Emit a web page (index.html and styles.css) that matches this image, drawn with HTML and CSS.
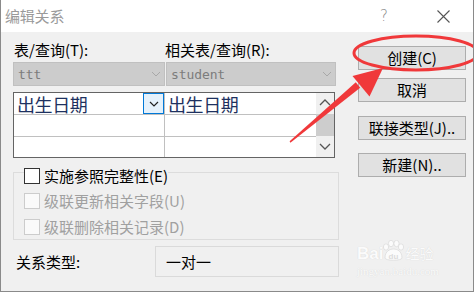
FILE: index.html
```html
<!DOCTYPE html>
<html lang="zh-CN">
<head>
<meta charset="utf-8">
<title>编辑关系</title>
<link rel="stylesheet" href="styles.css">
</head>
<body>
<div class="window">
  <div class="titlebar">
    <span class="title">编辑关系</span>
    <span class="help">?</span>
    <svg class="close" width="13" height="13" viewBox="0 0 13 13"><path d="M0.5 0.5 L12.5 12.5 M12.5 0.5 L0.5 12.5" stroke="#555" stroke-width="1.1" fill="none"/></svg>
  </div>
  <div class="content">
    <div class="main">
      <div class="labels">
        <span class="lab lab-left">表/查询(T):</span>
        <span class="lab lab-right">相关表/查询(R):</span>
      </div>
      <div class="combos">
        <div class="combo combo-left"><span class="combo-text">ttt</span><svg class="chev" width="10" height="6" viewBox="0 0 10 6"><path d="M1 1 L5 5 L9 1" stroke="#a8a8a8" stroke-width="1" fill="none"/></svg></div>
        <div class="combo combo-right"><span class="combo-text">student</span><svg class="chev" width="10" height="6" viewBox="0 0 10 6"><path d="M1 1 L5 5 L9 1" stroke="#a8a8a8" stroke-width="1" fill="none"/></svg></div>
      </div>
      <div class="grid">
        <div class="cells">
          <div class="cell c1 r1"><span class="cell-text">出生日期</span><span class="dd"><svg width="10" height="6" viewBox="0 0 10 6"><path d="M1 1 L5 5 L9 1" stroke="#222" stroke-width="1.2" fill="none"/></svg></span></div>
          <div class="cell c2 r1"><span class="cell-text">出生日期</span></div>
          <div class="cell c1 r2"></div>
          <div class="cell c2 r2"></div>
          <div class="cell c1 r3"></div>
          <div class="cell c2 r3"></div>
        </div>
        <div class="scrollbar">
          <svg class="sb-arrow" width="18" height="21" viewBox="0 0 18 21"><path d="M4 12 L9 7 L14 12" stroke="#555" stroke-width="1.3" fill="none"/></svg>
          <div class="sb-thumb"></div>
          <svg class="sb-arrow" width="18" height="21" viewBox="0 0 18 21"><path d="M4 8 L9 13 L14 8" stroke="#555" stroke-width="1.3" fill="none"/></svg>
        </div>
      </div>
      <fieldset class="group">
        <legend class="legend"><span class="cb"></span><span>实施参照完整性(E)</span></legend>
        <div class="opt disabled"><span class="cb cb-dis"></span><span>级联更新相关字段(U)</span></div>
        <div class="opt disabled"><span class="cb cb-dis"></span><span>级联删除相关记录(D)</span></div>
      </fieldset>
      <div class="type-row">
        <span class="type-label">关系类型:</span>
        <div class="type-box">一对一</div>
      </div>
    </div>
    <div class="buttons">
      <div class="btn btn-create">创建(C)</div>
      <div class="btn btn-cancel">取消</div>
      <div class="btn btn-join">联接类型(J)..</div>
      <div class="btn btn-new">新建(N)..</div>
    </div>
  </div>

  <div class="watermark">
    <div class="wm-top"><span class="wm-bai">Bai</span><svg class="wm-paw" width="24" height="22" viewBox="0 0 24 22"><g fill="#fbfbfb" stroke="#dcdcdc" stroke-width="0.8"><ellipse cx="5" cy="7" rx="2.6" ry="3.2"/><ellipse cx="10" cy="3.5" rx="2.6" ry="3.2"/><ellipse cx="15.5" cy="3.5" rx="2.6" ry="3.2"/><ellipse cx="20" cy="7" rx="2.6" ry="3.2"/><path d="M4 18 C4 11 9 9 12.5 9 C16 9 21 11 21 18 C21 21 4 21 4 18 Z"/></g><text x="12.5" y="18.5" font-size="8" text-anchor="middle" fill="#dcdcdc" font-family="Liberation Sans" font-weight="bold">du</text></svg><span class="wm-jy">经验</span></div>
    <div class="wm-url">jingyan.baidu.com</div>
  </div>

  <svg class="annot" width="474" height="292" viewBox="0 0 474 292">
    <ellipse cx="416" cy="53" rx="62" ry="17" fill="none" stroke="#f0383a" stroke-width="3"/>
    <polygon fill="#f0383a" points="290.4,142.8 289.6,141.2 355.8,82.3 360.2,87.7"/>
    <polygon fill="#f0383a" points="383,68 369.5,96.5 352.5,76"/>
  </svg>
</div>
</body>
</html>
```

FILE: styles.css
```css
* { box-sizing: border-box; }

html, body {
  margin: 0;
  padding: 0;
  background: #ffffff;
}

body {
  font-family: "Noto Sans CJK SC", "Liberation Sans", sans-serif;
  font-size: 15px;
  color: #000;
}

.window {
  position: relative;
  width: 474px;
  height: 292px;
  border: 1px solid #8a8a8a;
  border-top: none;
  background: #f0f0f0;
  display: flex;
  flex-direction: column;
  overflow: hidden;
}

.titlebar {
  height: 32px;
  background: #ffffff;
  display: flex;
  align-items: center;
  padding-left: 4px;
  flex: none;
}

.title {
  color: #9a9a9a;
  font-size: 15px;
  line-height: 20px;
  letter-spacing: -0.2px;
}

.help {
  margin-left: auto;
  color: #8a8a8a;
  font-family: "DejaVu Sans", sans-serif;
  font-weight: 300;
  font-size: 15px;
  line-height: 20px;
}

.close {
  margin-left: 49px;
  margin-right: 23px;
}

.content {
  flex: 1;
  display: flex;
  padding-left: 12px;
}

.main {
  width: 326px;
  display: flex;
  flex-direction: column;
}

.labels {
  display: flex;
  height: 20px;
  margin-top: 8px;
  line-height: 20px;
}

.lab-left {
  width: 152px;
  padding-left: 1px;
}

.combos {
  display: flex;
  margin-top: 2px;
  height: 24px;
  gap: 1px;
}

.combo {
  height: 24px;
  background: #cccccc;
  border: 1px solid #c0c0c0;
  display: flex;
  align-items: center;
  padding-left: 4px;
  padding-right: 3px;
}

.combo-left { width: 152px; }
.combo-right { width: 170px; }

.combo-text {
  font-family: "DejaVu Sans Mono", monospace;
  font-size: 13px;
  color: #7c7c7c;
  letter-spacing: -0.1px;
}

.chev { margin-left: auto; }

.grid {
  margin-top: 6px;
  width: 322px;
  height: 66px;
  border: 1px solid #646464;
  background: #fff;
  display: flex;
}

.cells {
  flex: 1;
  display: grid;
  grid-template-columns: 151px 151px;
  grid-template-rows: 22px 22px 20px;
}

.cell {
  display: flex;
  align-items: center;
  border-bottom: 1px solid #c0c0c0;
  padding-left: 3px;
  position: relative;
}

.c1 { border-right: 1px solid #c0c0c0; }
.r3 { border-bottom: none; }

.cell-text {
  font-size: 18px;
  line-height: 20px;
  color: #1e3160;
  letter-spacing: -0.4px;
}

.dd {
  margin-left: auto;
  width: 21px;
  height: 21px;
  background: #e5f1fb;
  border: 1px solid #0078d7;
  display: flex;
  align-items: center;
  justify-content: center;
  align-self: flex-start;
}

.scrollbar {
  width: 18px;
  background: #f0f0f0;
  display: flex;
  flex-direction: column;
}

.sb-arrow { display: block; flex: none; }

.sb-thumb {
  height: 22px;
  background: #cdcdcd;
  flex: none;
}

.group {
  margin: 2px 0 0 0;
  width: 326px;
  border: 1px solid #dcdcdc;
  padding: 0 0 4px 10px;
  min-width: 0;
}

.legend {
  padding: 8px 0 0 0;
  margin: 0;
  display: flex;
  align-items: center;
  height: 24px;
  line-height: 16px;
}

.cb {
  display: inline-block;
  width: 16px;
  height: 16px;
  border: 1px solid #333;
  background: #fff;
  margin-right: 4px;
  flex: none;
}

.cb-dis {
  border-color: #cccccc;
  background: #fafafa;
}

.opt {
  display: flex;
  align-items: center;
  height: 16px;
  line-height: 16px;
  margin-top: 10px;
}

.legend + .opt { margin-top: 9px; }

.disabled { color: #a0a0a0; }

.type-row {
  display: flex;
  align-items: center;
  margin-top: 6px;
  padding-left: 3px;
}

.type-label {
  width: 139px;
  line-height: 20px;
}

.type-box {
  width: 184px;
  height: 31px;
  border: 1px solid #dadada;
  display: flex;
  align-items: center;
  padding-left: 10px;
}

.buttons {
  margin-left: 19px;
  padding-top: 14px;
  display: flex;
  flex-direction: column;
  width: 108px;
}

.btn {
  height: 24px;
  background: #e1e1e1;
  border: 1px solid #adadad;
  display: flex;
  align-items: center;
  justify-content: center;
  line-height: 20px;
  white-space: nowrap;
}

.btn-cancel { margin-top: 8px; }
.btn-join { margin-top: 14px; }
.btn-new { margin-top: 13px; }

.watermark {
  position: absolute;
  left: 356px;
  top: 238px;
  width: 90px;
  display: flex;
  flex-direction: column;
  align-items: flex-start;
  pointer-events: none;
}

.wm-top {
  display: flex;
  align-items: flex-end;
  height: 24px;
}

.wm-bai {
  font-family: "Liberation Sans", sans-serif;
  font-weight: bold;
  font-size: 17px;
  line-height: 17px;
  color: #fbfbfb;
  text-shadow: 0 0 1px #cfcfcf;
}

.wm-paw { margin-left: -2px; }

.wm-jy {
  font-size: 14px;
  line-height: 17px;
  color: #fbfbfb;
  text-shadow: 0 0 1px #cfcfcf;
}

.wm-url {
  font-family: "Liberation Serif", serif;
  font-size: 11px;
  line-height: 14px;
  margin-top: 2px;
  color: #fbfbfb;
  text-shadow: 0 0 1px #cfcfcf;
}

.annot {
  position: absolute;
  left: -1px;
  top: 0;
  pointer-events: none;
}
```
